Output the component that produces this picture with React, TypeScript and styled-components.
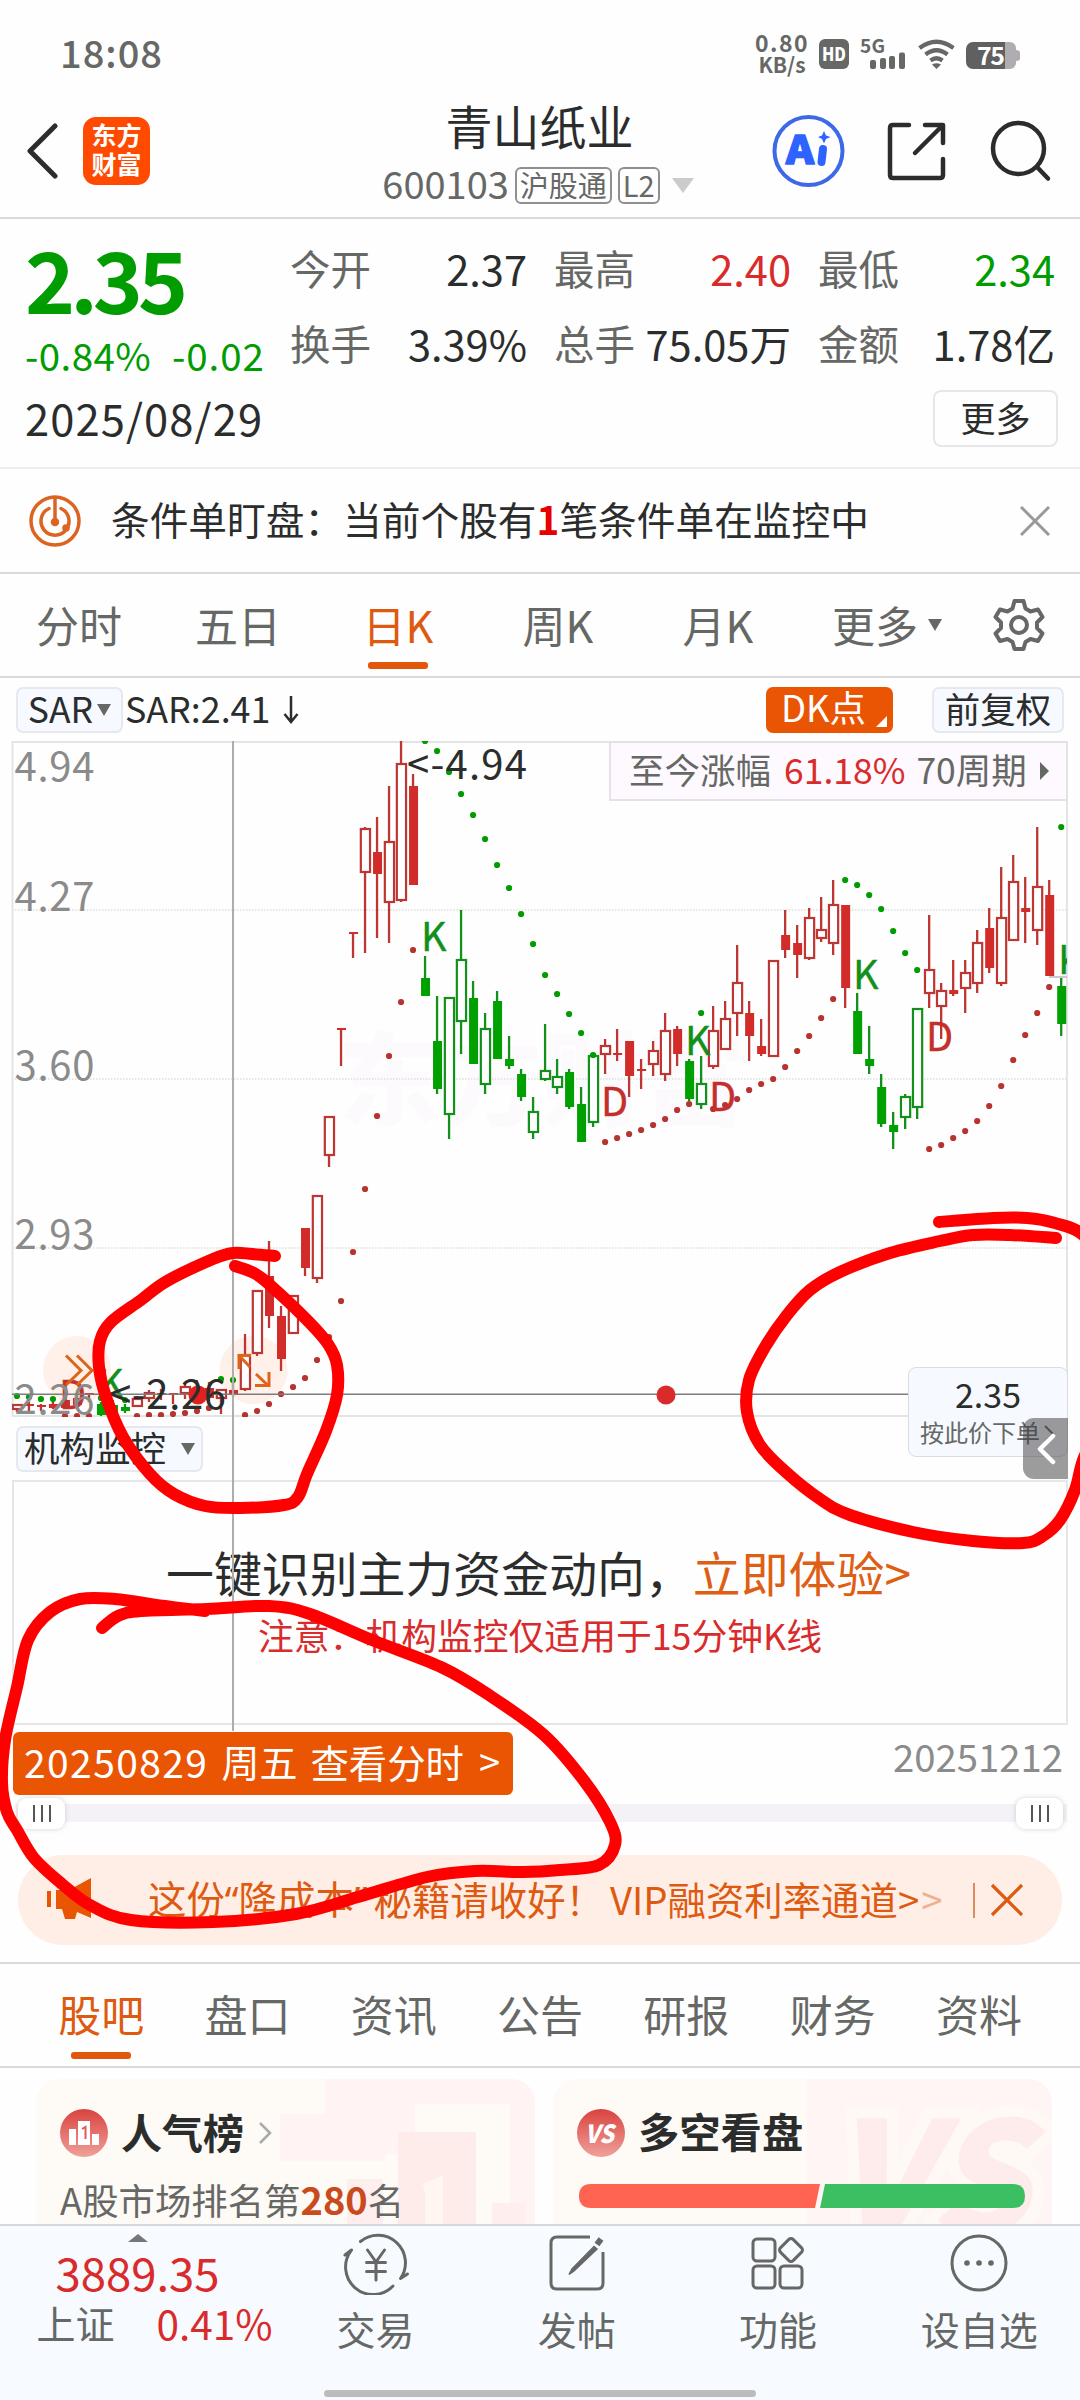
import React from 'react';
import styled, { createGlobalStyle } from 'styled-components';

const FONT = '"Noto Sans CJK SC", "Noto Sans", sans-serif';
const INK = '#2b2d2d';
const GREY = '#666866';
const ORANGE = '#ea5504';
const RED = '#d92b2b';
const GREEN = '#009c00';

const Global = createGlobalStyle`
  * { box-sizing: border-box; }
  body { margin: 0; background: #fefefe; font-family: ${FONT}; color: ${INK}; }
`;

const Page = styled.main`
  position: relative;
  width: 1080px;
  height: 2400px;
  overflow: hidden;
  display: flex;
  flex-direction: column;
  line-height: 1;
  white-space: nowrap;
`;

const Label = styled.span<{
  $size: number;
  $color?: string;
  $weight?: number;
  $track?: number;
  $lift?: number;
  $ml?: number;
  $mr?: number;
  $mt?: number;
}>`
  display: block;
  font-size: ${(p) => p.$size}px;
  color: ${(p) => p.$color ?? INK};
  font-weight: ${(p) => p.$weight ?? 400};
  letter-spacing: ${(p) => p.$track ?? 0}px;
  margin: ${(p) => p.$mt ?? 0}px ${(p) => p.$mr ?? 0}px ${(p) => p.$lift ?? 4}px ${(p) => p.$ml ?? 0}px;
`;

/* ---------- status bar ---------- */
const StatusBar = styled.header`
  height: 100px;
  padding: 8px 58px 0 60px;
  display: flex;
  justify-content: space-between;
  align-items: center;
  flex: none;
`;
const StatusIcons = styled.div`
  display: flex;
  align-items: center;
`;
const NetSpeed = styled.div`
  width: 60px;
  margin-right: 6px;
  font-size: 21px;
  font-weight: 700;
  line-height: 22px;
  color: ${GREY};
  text-align: center;
  padding-bottom: 2px;
`;
const SpeedFigure = styled.div`
  font-size: 23px;
  letter-spacing: 1.5px;
`;

/* ---------- title bar ---------- */
const TitleBar = styled.div`
  height: 119px;
  flex: none;
  display: grid;
  grid-template-columns: 344px 391px 345px;
  border-bottom: 2px solid #d9d9d9;
`;
const TitleLeft = styled.div`
  display: flex;
  align-items: center;
  gap: 24px;
  padding: 0 0 15px 26px;
`;
const Logo = styled.div`
  width: 67px;
  height: 68px;
  border-radius: 13px;
  background: #ff4a00;
  color: #fff;
  font-weight: 700;
  font-size: 25px;
  line-height: 29px;
  text-align: center;
  padding-top: 3px;
`;
const TitleCenter = styled.div`
  display: flex;
  flex-direction: column;
  align-items: center;
  padding-top: 1px;
`;
const CodeRow = styled.div`
  display: flex;
  align-items: center;
  gap: 6px;
  margin: 4px 3px 0 0;
`;
const Tag = styled.span`
  height: 37px;
  padding: 0 3px;
  border: 2px solid #8f8f8f;
  border-radius: 6px;
  color: ${GREY};
  font-size: 29px;
  line-height: 30px;
`;
const Caret = styled.i<{ $w: number; $h: number; $color?: string; $ml?: number }>`
  width: 0;
  height: 0;
  border-left: ${(p) => p.$w / 2}px solid transparent;
  border-right: ${(p) => p.$w / 2}px solid transparent;
  border-top: ${(p) => p.$h}px solid ${(p) => p.$color ?? GREY};
  margin-left: ${(p) => p.$ml ?? 0}px;
`;
const TitleRight = styled.div`
  display: flex;
  align-items: center;
  padding: 0 0 15px 35px;
`;

/* ---------- quote ---------- */
const Quote = styled.section`
  height: 250px;
  flex: none;
  padding: 0 24px 0 25px;
  border-bottom: 2px solid #ededed;
  display: grid;
  grid-template-columns: 265px 1fr;
  grid-template-rows: 164px 84px;
`;
const PriceCol = styled.div`
  display: flex;
  flex-direction: column;
  padding-top: 15px;
`;
const Change = styled.div`
  display: flex;
  gap: 21px;
  margin-top: 16px;
`;
const Stats = styled.div`
  display: grid;
  grid-template-columns: repeat(3, 237px);
  column-gap: 27px;
  grid-template-rows: 75px 75px;
  padding-top: 14px;
`;
const Stat = styled.div`
  display: flex;
  justify-content: space-between;
  align-items: center;
`;
const DateLine = styled.div`
  grid-column: 1 / 3;
  display: flex;
  justify-content: space-between;
  align-items: flex-start;
  padding: 7px 0 0 0;
`;
const MoreButton = styled.button`
  width: 125px;
  height: 57px;
  border: 2px solid #e8e6e8;
  border-radius: 8px;
  background: #fefefe;
  color: ${INK};
  font: 400 35px/1 ${FONT};
  padding: 0 0 5px;
  margin-right: -2px;
`;

/* ---------- notice ---------- */
const Notice = styled.section`
  height: 105px;
  flex: none;
  border-bottom: 2px solid #dadada;
  display: flex;
  align-items: center;
  padding: 0 30px 0 29px;
`;
const NoticeText = styled.p`
  margin: 0 auto 4px 30px;
  font-size: 38.7px;
`;
const Hot = styled.b`
  color: #e60000;
`;

/* ---------- tabs ---------- */
const PeriodTabs = styled.nav`
  height: 104px;
  flex: none;
  border-bottom: 2px solid #dadada;
  display: grid;
  grid-template-columns: 158px 160px 160px 160px 160px 178px 85px;
`;
const Tab = styled.div<{ $on?: boolean; $bar?: number }>`
  position: relative;
  display: flex;
  align-items: center;
  justify-content: center;
  font-size: 43px;
  color: ${(p) => (p.$on ? '#de5a10' : GREY)};
  &::after {
    content: '';
    display: ${(p) => (p.$on ? 'block' : 'none')};
    position: absolute;
    bottom: ${(p) => p.$bar ?? 7}px;
    width: 60px;
    height: 7px;
    border-radius: 3px;
    background: #e1580d;
  }
`;

/* ---------- chart ---------- */
const IndicatorBar = styled.div`
  height: 63px;
  flex: none;
  display: flex;
  align-items: center;
  padding: 0 16px 0 16px;
`;
const Chip = styled.div<{ $w: number; $solid?: boolean; $ml?: number }>`
  position: relative;
  width: ${(p) => p.$w}px;
  height: 46px;
  margin-left: ${(p) => p.$ml ?? 0}px;
  border: 2px solid ${(p) => (p.$solid ? ORANGE : '#e6e8ee')};
  border-radius: 7px;
  background: ${(p) => (p.$solid ? ORANGE : '#f6f9ff')};
  display: flex;
  align-items: center;
  justify-content: center;
`;
const Corner = styled.i`
  position: absolute;
  right: 4px;
  bottom: 4px;
  border-left: 11px solid transparent;
  border-bottom: 11px solid #fff;
`;
const Spacer = styled.div`
  flex: 1;
`;
const Arrow = styled.svg`
  margin-left: 10px;
`;
const ChartStack = styled.section`
  position: relative;
  height: 1055px;
  flex: none;
  display: flex;
  flex-direction: column;
`;
const ChartSvg = styled.svg`
  display: block;
  flex: none;
  font-family: ${FONT};
`;
const Gain = styled.div`
  position: absolute;
  left: 609px;
  top: 0;
  width: 459px;
  height: 60px;
  border: 2px solid #e5e1e7;
  background: #fdf9fe;
  display: flex;
  align-items: center;
  padding-left: 18px;
`;
const SideCaret = styled.i`
  border-top: 9px solid transparent;
  border-bottom: 9px solid transparent;
  border-left: 9px solid ${GREY};
  margin-left: 13px;
`;
const SubRow = styled.div`
  height: 63px;
  flex: none;
  display: flex;
  align-items: center;
  margin: 0 12px;
  padding-left: 4px;
`;
const Panel = styled.div`
  height: 245px;
  flex: none;
  margin: 0 12px;
  border: 2px solid #e6e6e6;
  display: flex;
  flex-direction: column;
  align-items: center;
  padding-top: 66px;
`;
const PanelLine = styled.div`
  display: flex;
  margin-left: -3px;
`;
const DateRow = styled.div`
  height: 71px;
  flex: none;
  display: flex;
  justify-content: space-between;
  align-items: center;
  padding: 5px 17px 0 13px;
`;
const DateButton = styled.div`
  width: 500px;
  height: 63px;
  border-radius: 6px;
  background: ${ORANGE};
  display: flex;
  align-items: center;
  padding-left: 11px;
`;
const CrossV = styled.i`
  position: absolute;
  left: 232px;
  top: 0;
  width: 2px;
  height: 990px;
  background: #adadad;
`;
const PriceBox = styled.div`
  position: absolute;
  left: 908px;
  top: 626px;
  width: 160px;
  height: 90px;
  border: 1.5px solid #d9dce4;
  border-radius: 8px;
  background: #f6f9ff;
  display: flex;
  flex-direction: column;
  align-items: center;
  padding-top: 9px;
`;
const OrderLine = styled.div`
  display: flex;
  align-items: center;
  gap: 3px;
  margin-top: 5px;
`;
const Drawer = styled.div`
  position: absolute;
  left: 1023px;
  top: 677px;
  width: 45px;
  height: 61px;
  border-radius: 11px 0 0 11px;
  background: rgba(60, 58, 60, 0.5);
  display: flex;
  align-items: center;
  justify-content: center;
  padding-left: 2px;
`;

/* ---------- range slider ---------- */
const Range = styled.div`
  height: 34px;
  flex: none;
  margin: 0 13px 1px 16px;
  padding: 0 4px 0 2px;
  display: flex;
  align-items: center;
  justify-content: space-between;
  background: linear-gradient(#f5f2f7, #f5f2f7) center / 100% 18px no-repeat;
`;
const Grip = styled.div`
  width: 47px;
  height: 31px;
  border-radius: 9px;
  background: #fff;
  box-shadow: 0 0 5px rgba(90, 80, 100, 0.25);
  display: flex;
  gap: 6px;
  align-items: center;
  justify-content: center;
`;
const GripLine = styled.i`
  width: 2px;
  height: 17px;
  background: #555;
`;

/* ---------- promo ---------- */
const PromoWrap = styled.div`
  height: 133px;
  flex: none;
  border-bottom: 2px solid #dadada;
  padding: 24px 18px 0;
`;
const Promo = styled.div`
  height: 90px;
  border-radius: 45px;
  background: #ffeee6;
  display: flex;
  align-items: center;
  padding: 0 38px 0 28px;
`;
const Quoted = styled.span`
  font-family: 'Noto Sans', sans-serif;
`;
const Bar = styled.i`
  width: 2px;
  height: 35px;
  background: #dd8b60;
  margin: 0 15px 0 auto;
`;

const InfoTabs = styled.nav`
  height: 104px;
  flex: none;
  border-bottom: 2px solid #dadada;
  padding: 0 28px;
  display: grid;
  grid-template-columns: repeat(7, 146.3px);
`;

/* ---------- cards ---------- */
const Cards = styled.section`
  height: 156px;
  flex: none;
  padding: 11px 28px 0 36px;
  display: grid;
  grid-template-columns: 499px 499px;
  gap: 18px;
  overflow: hidden;
`;
const Card = styled.article`
  position: relative;
  height: 180px;
  border-radius: 24px;
  overflow: hidden;
  background: #fefaf6;
  padding: 29px 24px;
`;
const CardArt = styled.svg`
  position: absolute;
  right: 0;
  top: 0;
`;
const CardHead = styled.div`
  position: relative;
  display: flex;
  align-items: center;
  height: 50px;
`;
const Chevron = styled.svg`
  margin-left: 14px;
`;
const Rank = styled.p`
  position: relative;
  margin: 22px 0 0;
  font-size: 36.4px;
  color: ${GREY};
`;
const RankNo = styled.b`
  color: #c94a1d;
  font-size: 38px;
`;
const Ratio = styled.svg`
  position: relative;
  display: block;
  margin: 25px 0 0 2px;
`;

/* ---------- footer ---------- */
const Footer = styled.footer`
  height: 176px;
  flex: none;
  border-top: 2px solid #d6d8de;
  background: #f7faff;
  display: grid;
  grid-template-columns: 275px repeat(4, 201.25px);
  grid-template-rows: 160px 14px;
`;
const IndexCell = styled.div`
  display: flex;
  flex-direction: column;
  align-items: center;
  padding-top: 8px;
`;
const IndexRow = styled.div`
  display: flex;
  gap: 42px;
  align-items: center;
  margin: 4px 0 0 34px;
`;
const NavCell = styled.div`
  display: flex;
  flex-direction: column;
  align-items: center;
  padding-top: 7px;
  gap: 14px;
`;
const Home = styled.i`
  grid-column: 1 / -1;
  justify-self: center;
  align-self: start;
  margin-top: 4px;
  width: 432px;
  height: 7px;
  border-radius: 4px;
  background: #bcbcbc;
`;
const Ink = styled.svg`
  position: absolute;
  left: 0;
  top: 0;
  pointer-events: none;
`;

/* ---------- chart data: [slot, kind, body top, body bottom, high, low] ---------- */
type Kind = 'r' | 'R' | 'g' | 'G';
type Candle = [number, Kind, number, number, number, number];
const candles: Candle[] = [
  [-18, 'r', 1404, 1410, 1404, 1412], [-17, 'R', 1404, 1406, 1402, 1411], [-16, 'R', 1405, 1407, 1404, 1411],
  [-15, 'R', 1404, 1408, 1402, 1409], [-14, 'R', 1400, 1408, 1398, 1409], [-13, 'R', 1398, 1405, 1396, 1407],
  [-12, 'R', 1393, 1395, 1393, 1402], [-11, 'G', 1404, 1415, 1402, 1416], [-10, 'G', 1405, 1414, 1400, 1414],
  [-9, 'G', 1407, 1411, 1404, 1413], [-8, 'r', 1398, 1407, 1396, 1407], [-7, 'r', 1392, 1399, 1390, 1402],
  [-6, 'R', 1393, 1395, 1389, 1400], [-5, 'R', 1393, 1395, 1393, 1404], [-4, 'r', 1386, 1394, 1384, 1399],
  [-3, 'R', 1387, 1397, 1380, 1400], [-2, 'R', 1388, 1398, 1382, 1401], [-1, 'r', 1389, 1399, 1389, 1414],
  [0, 'R', 1390, 1394, 1383, 1397], [1, 'r', 1354, 1390, 1334, 1391], [2, 'r', 1290, 1354, 1290, 1356],
  [3, 'R', 1276, 1316, 1241, 1328], [4, 'R', 1316, 1359, 1306, 1371], [5, 'r', 1295, 1334, 1295, 1334],
  [6, 'R', 1228, 1268, 1228, 1276], [7, 'r', 1195, 1279, 1195, 1283], [8, 'r', 1116, 1156, 1116, 1167],
  [9, 'R', 1028, 1030, 1028, 1066], [10, 'R', 932, 934, 932, 958], [11, 'r', 828, 873, 827, 953],
  [12, 'R', 852, 874, 817, 938], [13, 'r', 841, 903, 786, 943], [14, 'r', 763, 901, 741, 902],
  [15, 'R', 786, 885, 774, 885], [16, 'G', 978, 996, 956, 996], [17, 'G', 1041, 1089, 996, 1094],
  [18, 'g', 997, 1115, 997, 1139], [19, 'g', 959, 1022, 910, 1054], [20, 'G', 998, 1064, 981, 1064],
  [21, 'g', 1028, 1085, 1013, 1094], [22, 'G', 1001, 1059, 991, 1059], [23, 'G', 1059, 1066, 1036, 1069],
  [24, 'G', 1074, 1097, 1069, 1101], [25, 'g', 1111, 1133, 1097, 1139], [26, 'g', 1070, 1080, 1024, 1081],
  [27, 'g', 1076, 1088, 1059, 1094], [28, 'G', 1072, 1107, 1069, 1109], [29, 'G', 1104, 1142, 1087, 1142],
  [30, 'g', 1055, 1123, 1055, 1127], [31, 'r', 1045, 1055, 1039, 1074], [32, 'R', 1053, 1055, 1029, 1061],
  [33, 'R', 1041, 1076, 1041, 1097], [34, 'R', 1069, 1071, 1059, 1089], [35, 'r', 1050, 1065, 1041, 1076],
  [36, 'r', 1030, 1075, 1013, 1081], [37, 'R', 1029, 1054, 1026, 1066], [38, 'G', 1061, 1099, 1059, 1101],
  [39, 'g', 1083, 1105, 1056, 1109], [40, 'r', 1030, 1067, 1006, 1069], [41, 'r', 1018, 1050, 1001, 1050],
  [42, 'r', 982, 1014, 945, 1036], [43, 'R', 1013, 1036, 1001, 1061], [44, 'R', 1046, 1054, 1019, 1056],
  [45, 'r', 960, 1057, 960, 1057], [46, 'R', 935, 950, 910, 958], [47, 'R', 943, 955, 925, 978],
  [48, 'r', 917, 959, 908, 960], [49, 'r', 929, 939, 897, 942], [50, 'r', 904, 944, 880, 955],
  [51, 'R', 905, 988, 905, 1008], [52, 'G', 1011, 1054, 993, 1054], [53, 'G', 1059, 1066, 1026, 1074],
  [54, 'G', 1087, 1124, 1074, 1127], [55, 'G', 1125, 1132, 1112, 1149], [56, 'g', 1096, 1118, 1094, 1129],
  [57, 'g', 1008, 1108, 1008, 1119], [58, 'r', 969, 994, 915, 1008], [59, 'r', 990, 1007, 983, 1039],
  [60, 'R', 990, 994, 960, 996], [61, 'r', 972, 989, 960, 1013], [62, 'r', 942, 984, 930, 993],
  [63, 'R', 928, 968, 908, 973], [64, 'r', 917, 984, 867, 986], [65, 'r', 881, 941, 855, 941],
  [66, 'R', 908, 912, 877, 943], [67, 'r', 886, 931, 827, 945], [68, 'R', 895, 976, 880, 976],
  [69, 'G', 986, 1024, 978, 1036],
];

/* SAR dots: colour, first slot, y of each following slot */
const sar: [string, number, number[]][] = [
  [GREEN, -18, [1396, 1397, 1399, 1399]],
  ['#b8322f', -14, [1416, 1416, 1416]],
  [GREEN, -11, [1398]],
  [GREEN, -9, [1400]],
  ['#b8322f', -8, [1416, 1415, 1415, 1414, 1413, 1411, 1408]],
  [GREEN, -1, [1379, 1380]],
  ['#b8322f', 1, [1415, 1411, 1404, 1394, 1387, 1378, 1360, 1337, 1301, 1252, 1189, 1116, 1056, 1002, 950]],
  [GREEN, 16, [741, 751, 772, 794, 815, 839, 865, 888, 914, 944, 975, 994, 1014, 1033, 1055]],
  ['#b8322f', 31, [1142, 1138, 1134, 1130, 1125, 1119, 1110, 1104]],
  [GREEN, 39, [1013]],
  ['#b8322f', 40, [1109, 1105, 1099, 1090, 1084, 1079, 1067, 1051, 1036, 1018, 999]],
  [GREEN, 51, [880, 885, 895, 909, 931, 953, 970]],
  ['#b8322f', 58, [1149, 1145, 1138, 1131, 1121, 1106, 1086, 1060, 1035, 1013, 987]],
  [GREEN, 69, [827]],
];
const slotX = (i: number) => 233 + i * 12.003;

const marks: [string, number, number][] = [
  ['K', 421, 951], ['K', 853, 989], ['K', 685, 1055], ['K', 1058, 974], ['K', 98, 1398],
  ['D', 601, 1116], ['D', 709, 1111], ['D', 926, 1051], ['D', 59, 1409],
];

const CandleMark = ({ c }: { c: Candle }) => {
  const [i, kind, top, bottom, high, low] = c;
  const x = slotX(i);
  const red = kind === 'r' || kind === 'R';
  const hollow = kind === 'r' || kind === 'g';
  const line = red ? '#bd3632' : '#12911a';
  return (
    <g>
      {high < top && <line x1={x} x2={x} y1={high} y2={top} stroke={line} strokeWidth={2.3} />}
      {low > bottom && <line x1={x} x2={x} y1={bottom} y2={low} stroke={line} strokeWidth={2.3} />}
      {hollow ? (
        <rect x={x - 4.2} y={top + 1} width={9.2} height={bottom - top - 2} fill="#fefefe" stroke={line} strokeWidth={2.2} />
      ) : (
        <rect x={x - 4} y={top} width={9} height={bottom - top} fill={red ? '#d12c2a' : '#00a000'} />
      )}
    </g>
  );
};

const scale: [string, number][] = [['4.94', 781], ['4.27', 911], ['3.60', 1080], ['2.93', 1249], ['2.26', 1414]];

const Chart = () => (
  <ChartSvg width={1080} height={676} viewBox="0 741 1080 676">
    <defs>
      <clipPath id="plot">
        <rect x={12} y={741} width={1055} height={676} />
      </clipPath>
    </defs>
    <text x={338} y={1118} fontSize={102} fontWeight={900} fill="#fdfafd">东方财富</text>
    {[910, 1079, 1248].map((y) => (
      <line key={y} x1={12} x2={1067} y1={y} y2={y} stroke="#dedede" strokeWidth={1.5} strokeDasharray="1.5 1.5" />
    ))}
    <rect x={12.5} y={742} width={1054.5} height={674} fill="none" stroke="#e4e4e4" strokeWidth={2} />
    <circle cx={77} cy={1370} r={34} fill="#fff0ea" />
    <circle cx={253.5} cy={1370} r={34} fill="#fff0ea" />
    <g clipPath="url(#plot)">
      {candles.map((c) => <CandleMark key={c[0]} c={c} />)}
      {sar.map(([color, first, ys]) =>
        ys.map((y, n) => <circle key={`${first}-${n}`} cx={slotX(first + n)} cy={y} r={3.1} fill={color} />),
      )}
      {marks.map(([t, x, y]) => {
        const ink = t === 'K' ? '#12911a' : '#c3302c';
        return (
          <text key={`${t}${x}`} x={x} y={y} fontSize={39.5} fill={ink} stroke={ink} strokeWidth={0.4}>{t}</text>
        );
      })}
    </g>
    <line x1={1049} x2={1067} y1={977} y2={977} stroke="#c9c9cd" strokeWidth={2} />
    <g fill="#8b8b8b" fontSize={40}>
      {scale.map(([t, y]) => <text key={t} x={14.5} y={y} textLength={80}>{t}</text>)}
    </g>
    <line x1={12} x2={908} y1={1394.3} y2={1394.3} stroke="#7d7d7d" strokeWidth={1.6} />
    <circle cx={198} cy={1395} r={9.5} fill="#e32020" />
    <circle cx={666} cy={1395} r={9.5} fill="#d92b2b" />
    <g fill="#2b2d2d" fontSize={40}>
      <text x={407} y={779} textLength={120}>&lt;-4.94</text>
      <text x={109} y={1409} textLength={117}>&lt;-2.26</text>
    </g>
    <g fill="none" stroke="#dd6418" strokeWidth={3}>
      <path d="M66 1355.500L81 1370.500L66 1385M77 1355.500L92 1370.500L77 1385" />
      <path d="M239 1369V1355.500H251M239.500 1356L250 1367M256 1374L268 1385.500M269 1372V1385.500H255" />
    </g>
  </ChartSvg>
);

/* ---------- freehand strokes ---------- */
type Pt = [number, number];
const smooth = (p: Pt[]) => {
  let d = `M${p[0][0]} ${p[0][1]}`;
  for (let i = 0; i < p.length - 1; i++) {
    const a = p[i - 1] ?? p[i];
    const b = p[i];
    const c = p[i + 1];
    const e = p[i + 2] ?? c;
    d += `C${b[0] + (c[0] - a[0]) / 6} ${b[1] + (c[1] - a[1]) / 6} ${c[0] - (e[0] - b[0]) / 6} ${c[1] - (e[1] - b[1]) / 6} ${c[0]} ${c[1]}`;
  }
  return d;
};
const loopA: Pt[] = [
  [275, 1256], [252, 1254], [233, 1253], [213, 1259], [167, 1281], [141, 1300], [111, 1322], [100, 1341], [99, 1367],
  [106, 1397], [123, 1437], [150, 1474], [174, 1494], [205, 1506], [240, 1508], [284, 1505], [298, 1497], [307, 1474],
  [326, 1431], [337, 1395], [337, 1365], [328, 1344], [308, 1321], [270, 1285], [254, 1273], [235, 1266],
];
const loopB: Pt[] = [
  [939, 1222], [993, 1218], [1027, 1218], [1055, 1223], [1083, 1235], [1105, 1270], [1112, 1340], [1100, 1420], [1083, 1460],
  [1075, 1490], [1060, 1520], [1043, 1536], [1023, 1543], [973, 1541], [913, 1532], [850, 1515], [820, 1499], [787, 1473],
  [760, 1445], [747, 1412], [749, 1380], [765, 1347], [787, 1315], [810, 1290], [840, 1272], [890, 1253], [940, 1241],
  [973, 1235], [1010, 1235], [1056, 1238],
];
const loopC: Pt[] = [
  [102, 1628], [118, 1616], [141, 1611], [207, 1609], [269, 1606], [310, 1614], [372, 1640], [441, 1667], [489, 1695],
  [544, 1735], [585, 1782], [610, 1822], [615, 1845], [599, 1865], [560, 1870], [523, 1872], [475, 1871], [427, 1877],
  [358, 1897], [296, 1914], [213, 1922], [131, 1920], [90, 1905], [62, 1884], [34, 1858], [17, 1830], [7, 1812],
  [2, 1783], [5, 1740], [17, 1687], [28, 1640], [50, 1612], [80, 1599], [115, 1599], [165, 1606], [205, 1611],
];

const Megaphone = () => (
  <svg width={52} height={48} viewBox="0 0 52 48" fill="#ea5504">
    <rect x={1} y={15} width={4} height={16} />
    <path d="M10 14H23L45 2V42L31 36L29 43H19L16 33H10Z" />
  </svg>
);

const periods = ['分时', '五日', '日K', '周K', '月K'];
const infos = ['股吧', '盘口', '资讯', '公告', '研报', '财务', '资料'];
const stats: [string, string, string][] = [
  ['今开', '2.37', INK], ['最高', '2.40', RED], ['最低', '2.34', GREEN],
  ['换手', '3.39%', INK], ['总手', '75.05万', INK], ['金额', '1.78亿', INK],
];

export default function App() {
  return (
    <Page>
      <Global />
      <StatusBar>
        <Label $size={38} $weight={500} $color={GREY} $track={1}>18:08</Label>
        <StatusIcons>
          <NetSpeed>
            <SpeedFigure>0.80</SpeedFigure>
            KB/s
          </NetSpeed>
          <svg width={204} height={36} viewBox="818 36 204 36" fontFamily={FONT} fontWeight={900}>
            <rect x={819} y={39} width={30} height={30} rx={6} fill={GREY} />
            <text x={834} y={60.500} fontSize={18} fill="#fff" textAnchor="middle" textLength={24} lengthAdjust="spacingAndGlyphs">HD</text>
            <text x={860} y={53} fontSize={19} fontWeight={700} fill={GREY} textLength={25}>5G</text>
            <g fill={GREY}>
              <rect x={870} y={60} width={6} height={9} rx={2} />
              <rect x={880} y={58} width={6} height={11} rx={2} />
              <rect x={889} y={56} width={6} height={13} rx={2} />
              <rect x={899} y={52.500} width={6} height={16.500} rx={2} />
            </g>
            <g fill="none" stroke={GREY} strokeWidth={4.200}>
              <path d="M919.500 48Q936.500 35.500 953.500 48" />
              <path d="M925.500 54.500Q936.500 46 947.500 54.500" />
              <path d="M930.500 60.500Q936.500 56 942.500 60.500" />
            </g>
            <path d="M932 64.500Q936.500 62 941 64.500L936.500 69Z" fill={GREY} />
            <path d="M1004 42h6a6 6 0 0 1 6 6v2q4 0 4 2.500v6q0 2.500-4 2.500v2a6 6 0 0 1-6 6h-6z" fill="#b0adb2" />
            <path d="M973 42h32v27h-32a7 7 0 0 1-7-7v-13a7 7 0 0 1 7-7z" fill="#5f605f" />
            <text x={977} y={65} fontSize={25} fontWeight={700} fill="#fff" textLength={28}>75</text>
          </svg>
        </StatusIcons>
      </StatusBar>

      <TitleBar>
        <TitleLeft>
          <svg width={33} height={56} viewBox="0 0 33 56" fill="none" stroke="#2b2d2d" strokeWidth={5} strokeLinecap="round" strokeLinejoin="round">
            <path d="M29 3L4 28L29 53" />
          </svg>
          <Logo>东方<br />财富</Logo>
        </TitleLeft>
        <TitleCenter>
          <Label $size={47} $lift={12}>青山纸业</Label>
          <CodeRow>
            <Label $size={38} $color={GREY}>600103</Label>
            <Tag>沪股通</Tag>
            <Tag>L2</Tag>
            <Caret $w={22} $h={15} $color="#cbcbcb" $ml={6} />
          </CodeRow>
        </TitleCenter>
        <TitleRight>
          <svg width={300} height={76} viewBox="770 113 300 76" fill="none" strokeLinecap="round" strokeLinejoin="round">
            <circle cx={808.5} cy={151} r={34} stroke="#3f68e8" strokeWidth={4} />
            <text x={786} y={164} fontSize={39} fontWeight={900} fontFamily={FONT} fill="#2f63ff" stroke="#2f63ff" strokeWidth={1.5} textLength={28} lengthAdjust="spacingAndGlyphs">A</text>
            <path d="M823 149L821.500 162" stroke="#2f63ff" strokeWidth={8} />
            <path d="M824 131L826 135.500L830.500 137L826 139L824 143.500L822 139L818 137L822 135.500Z" fill="#2f63ff" />
            <g stroke="#2b2d2d" strokeWidth={4.500}>
              <path d="M909 125H893Q890 125 890 128V175Q890 178 893 178H940Q943 178 943 175V159" />
              <path d="M925 125H943V143M941 127L915 153" />
              <circle cx={1018.5} cy={148.5} r={25.5} />
              <path d="M1038 168L1048 178.500" />
            </g>
          </svg>
        </TitleRight>
      </TitleBar>

      <Quote>
        <PriceCol>
          <Label $size={85} $weight={700} $color={GREEN} $lift={0} $track={-5}>2.35</Label>
          <Change>
            <Label $size={38.5} $color={GREEN} $track={0.4}>-0.84%</Label>
            <Label $size={38.5} $color={GREEN} $track={0.9}>-0.02</Label>
          </Change>
        </PriceCol>
        <Stats>
          {stats.map(([k, v, color]) => (
            <Stat key={k}>
              <Label $size={40.5} $color={GREY}>{k}</Label>
              <Label $size={41.6} $color={color}>{v}</Label>
            </Stat>
          ))}
        </Stats>
        <DateLine>
          <Label $size={43.5} $track={1.1} $mt={6}>2025/08/29</Label>
          <MoreButton>更多</MoreButton>
        </DateLine>
      </Quote>

      <Notice>
        <svg width={52} height={54} viewBox="0 0 52 54" fill="none" stroke="#dc6420" strokeWidth={3.5} strokeLinecap="round">
          <circle cx={26} cy={27} r={24} />
          <path d="M20 14.500A14 14 0 1 0 32 14.500" />
          <path d="M26 4V27" />
          <circle cx={26} cy={28} r={2.5} fill="#dc6420" />
          <circle cx={37} cy={34} r={2} fill="#dc6420" />
        </svg>
        <NoticeText>条件单盯盘：当前个股有<Hot>1</Hot>笔条件单在监控中</NoticeText>
        <svg width={30} height={30} viewBox="0 0 30 30" stroke="#999" strokeWidth={3}>
          <path d="M1 1L29 29M29 1L1 29" />
        </svg>
      </Notice>

      <PeriodTabs>
        {periods.map((t) => (
          <Tab key={t} $on={t === '日K'}>
            <Label $size={43} $color="inherit" $lift={1}>{t}</Label>
          </Tab>
        ))}
        <Tab>
          <Label $size={43} $color="inherit" $lift={1}>更多</Label>
          <Caret $w={15} $h={12} $ml={10} />
        </Tab>
        <Tab>
          <svg width={56} height={56} viewBox="0 0 56 56" fill="none" stroke={GREY} strokeWidth={4} strokeLinejoin="round">
            <path d="M23.500 4H32.500L34.500 11.500L39.500 14.500L47 12.500L51.500 20L46 25.500V31L51.500 36.500L47 44L39.500 42L34.500 45L32.500 52H23.500L21.500 45L16.500 42L9 44L4.500 36.500L10 31V25.500L4.500 20L9 12.500L16.500 14.500L21.500 11.500Z" />
            <circle cx={28} cy={28} r={8} />
          </svg>
        </Tab>
      </PeriodTabs>

      <IndicatorBar>
        <Chip $w={107}>
          <Label $size={35.5}>SAR</Label>
          <Caret $w={14} $h={12} $ml={4} />
        </Chip>
        <Label $size={35.8} $ml={2}>SAR:2.41</Label>
        <Arrow width={22} height={32} viewBox="0 0 22 32" fill="none" stroke={INK} strokeWidth={2.5}>
          <path d="M11 2V28M4.500 20L11 28L17.500 20" />
        </Arrow>
        <Spacer />
        <Chip $w={127} $solid>
          <Label $size={36.5} $color="#fff" $mr={12}>DK点</Label>
          <Corner />
        </Chip>
        <Chip $w={132} $ml={39}>
          <Label $size={35.5}>前复权</Label>
        </Chip>
      </IndicatorBar>

      <ChartStack>
        <Chart />
        <SubRow>
          <Chip $w={187}>
            <Label $size={35.5}>机构监控</Label>
            <Caret $w={15} $h={12} $ml={15} />
          </Chip>
        </SubRow>
        <Panel>
          <PanelLine>
            <Label $size={47.9}>一键识别主力资金动向，</Label>
            <Label $size={47.9} $color="#de5f14">立即体验&gt;</Label>
          </PanelLine>
          <Label $size={35.8} $color={RED} $mt={17}>注意：机构监控仅适用于15分钟K线</Label>
        </Panel>
        <DateRow>
          <DateButton>
            <Label $size={39} $color="#fff" $track={1.4}>20250829</Label>
            <Label $size={38} $color="#fff" $ml={13}>周五</Label>
            <Label $size={38.4} $color="#fff" $ml={13}>查看分时</Label>
            <Label $size={38} $color="#fff" $ml={15}>&gt;</Label>
          </DateButton>
          <Label $size={38.3} $color="#8b8b8b" $lift={14}>20251212</Label>
        </DateRow>
        <CrossV />
        <Gain>
          <Label $size={35.5} $color={GREY}>至今涨幅</Label>
          <Label $size={35.5} $color={RED} $ml={13}>61.18%</Label>
          <Label $size={35.5} $color={GREY} $ml={11}>70周期</Label>
          <SideCaret />
        </Gain>
        <PriceBox>
          <Label $size={34}>2.35</Label>
          <OrderLine>
            <Label $size={24} $color={GREY}>按此价下单</Label>
            <svg width={13} height={18} viewBox="0 0 13 18" fill="none" stroke={GREY} strokeWidth={2}>
              <path d="M2 1L10 9L2 17" />
            </svg>
          </OrderLine>
        </PriceBox>
        <Drawer>
          <svg width={20} height={32} viewBox="0 0 20 32" fill="none" stroke="#fff" strokeWidth={4.500} strokeLinecap="round" strokeLinejoin="round">
            <path d="M16 3L3 16L16 29" />
          </svg>
        </Drawer>
      </ChartStack>

      <Range>
        {['from', 'to'].map((k) => (
          <Grip key={k}>
            <GripLine />
            <GripLine />
            <GripLine />
          </Grip>
        ))}
      </Range>

      <PromoWrap>
        <Promo>
          <Megaphone />
          <Label $size={38.4} $color="#de5a10" $ml={50}>
            这份<Quoted>“</Quoted>降成本<Quoted>”</Quoted>
          </Label>
          <Label $size={38.4} $color="#de5a10" $ml={6}>秘籍请收好！</Label>
          <Label $size={38.4} $color="#de5a10" $ml={6}>VIP融资利率通道&gt;</Label>
          <Label $size={38.4} $color="#f0b190" $ml={2}>&gt;</Label>
          <Bar />
          <svg width={34} height={34} viewBox="0 0 34 34" stroke="#de5a10" strokeWidth={3.2}>
            <path d="M2 2L32 32M32 2L2 32" />
          </svg>
        </Promo>
      </PromoWrap>

      <InfoTabs>
        {infos.map((t, n) => (
          <Tab key={t} $on={n === 0}>
            <Label $size={43} $color="inherit" $lift={3}>{t}</Label>
          </Tab>
        ))}
      </InfoTabs>

      <Cards>
        <Card>
          <CardArt width={260} height={180} viewBox="0 0 260 180">
            <path d="M50 0H260V180H235V25H140V75H110V82H5V35H50Z" fill="#fff3f3" />
            <path d="M123 53H201V180H123Z" fill="#feecea" />
            <path d="M72 100H108V180H72ZM217 124H250V180H217Z" fill="#feeeee" />
            <path d="M148 105L168 96V150H150V115Z" fill="#fff6f2" />
          </CardArt>
          <CardHead>
            <svg width={48} height={48} viewBox="0 0 48 48">
              <defs>
                <linearGradient id="badge" x1="0" y1="0" x2="0" y2="1">
                  <stop offset="0" stopColor="#d9433f" />
                  <stop offset="1" stopColor="#f0a09a" />
                </linearGradient>
              </defs>
              <circle cx={24} cy={24} r={24} fill="url(#badge)" />
              <path d="M9 20H16V36H9ZM18 12H30V36H18ZM32 25H39V36H32Z" fill="#fff" />
              <path d="M22 20L25.500 18V30" fill="none" stroke="#dc5a55" strokeWidth={2} />
            </svg>
            <Label $size={41} $weight={700} $ml={13}>人气榜</Label>
            <Chevron width={16} height={24} viewBox="0 0 16 24" fill="none" stroke="#aaa" strokeWidth={2.5}>
              <path d="M2 2L12 12L2 22" />
            </Chevron>
          </CardHead>
          <Rank>A股市场排名第<RankNo>280</RankNo>名</Rank>
        </Card>
        <Card>
          <CardArt width={245} height={180} viewBox="0 0 245 180" fontFamily={FONT} fontWeight={900} fontStyle="italic">
            <rect width={245} height={180} fill="#fff5f5" />
            <text x={22} y={155} fontSize={155} fill="#feecec" stroke="#fff9f6" strokeWidth={22} paintOrder="stroke" textLength={200} lengthAdjust="spacingAndGlyphs">VS</text>
          </CardArt>
          <CardHead>
            <svg width={48} height={48} viewBox="0 0 48 48">
              <circle cx={24} cy={24} r={24} fill="url(#badge)" />
              <text x={22.5} y={33.500} fontSize={25} fontWeight={900} fontStyle="italic" fontFamily={FONT} fill="#fff" textAnchor="middle" textLength={29} lengthAdjust="spacingAndGlyphs">VS</text>
            </svg>
            <Label $size={41.3} $weight={700} $ml={13}>多空看盘</Label>
          </CardHead>
          <Ratio width={448} height={26} viewBox="0 0 448 26">
            <path d="M12 1H241L236 25H12Q0 25 0 13Q0 1 12 1Z" fill="#ff6452" />
            <path d="M246 1H434Q446 1 446 13Q446 25 434 25H241Z" fill="#3cbf62" />
          </Ratio>
        </Card>
      </Cards>

      <Footer>
        <IndexCell>
          <svg width={20} height={8} viewBox="0 0 20 8" fill="#77777b"><path d="M10 0L20 8H0Z" /></svg>
          <Label $size={45.5} $color={RED} $mt={7}>3889.35</Label>
          <IndexRow>
            <Label $size={39} $color={GREY}>上证</Label>
            <Label $size={40.5} $color={RED}>0.41%</Label>
          </IndexRow>
        </IndexCell>
        <NavCell>
          <svg width={70} height={62} viewBox="-2 0 70 62" fill="none" stroke={GREY} strokeWidth={3} strokeLinecap="round" strokeLinejoin="round">
            <path d="M17.500 8.500A27.500 27.500 0 0 1 57.500 45.500L64.500 41M50 53A27.500 27.500 0 0 1 8.500 17L2 22" />
            <path d="M24.500 17L33 29L41.500 17M33 29V47M23.500 29.500H42.500M23.500 38.500H42.500" />
          </svg>
          <Label $size={39} $color={GREY}>交易</Label>
        </NavCell>
        <NavCell>
          <svg width={60} height={62} viewBox="0 0 60 62" fill="none" stroke={GREY} strokeWidth={3}>
            <path d="M43 4H10Q4 4 4 10V50Q4 56 10 56H50Q56 56 56 50V19" />
            <path d="M54 6L50 11.500" strokeWidth={6} />
            <path d="M47 13.500L25 36L22 41.500L27 38L50 16Z" fill={GREY} strokeWidth={1.500} />
          </svg>
          <Label $size={39} $color={GREY}>发帖</Label>
        </NavCell>
        <NavCell>
          <svg width={60} height={62} viewBox="0 0 60 62" fill="none" stroke={GREY} strokeWidth={3}>
            <rect x={5} y={6} width={22} height={22} rx={4} />
            <rect x={5} y={33} width={22} height={22} rx={4} />
            <rect x={32} y={33} width={22} height={22} rx={4} />
            <rect x={34} y={8} width={18} height={18} rx={3} transform="rotate(45 43 17)" />
          </svg>
          <Label $size={39} $color={GREY}>功能</Label>
        </NavCell>
        <NavCell>
          <svg width={60} height={62} viewBox="0 0 60 62" fill="none" stroke={GREY} strokeWidth={3}>
            <circle cx={30} cy={30} r={27} />
            <g fill={GREY} stroke="none">
              <circle cx={18} cy={30} r={2.8} />
              <circle cx={30} cy={30} r={2.8} />
              <circle cx={42} cy={30} r={2.8} />
            </g>
          </svg>
          <Label $size={39} $color={GREY}>设自选</Label>
        </NavCell>
        <Home />
      </Footer>

      <Ink width={1080} height={2400} viewBox="0 0 1080 2400" fill="none" stroke="#ff0000" strokeWidth={12} strokeLinecap="round" strokeLinejoin="round">
        <path d={smooth(loopA)} />
        <path d={smooth(loopB)} />
        <path d={smooth(loopC)} />
      </Ink>
    </Page>
  );
}
